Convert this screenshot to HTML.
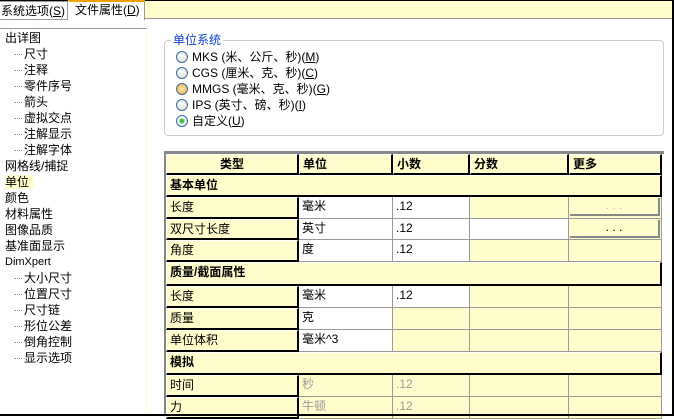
<!DOCTYPE html>
<html><head><meta charset="utf-8"><style>
*{margin:0;padding:0;box-sizing:border-box}
body{width:674px;height:416px;overflow:hidden;background:#fff;position:relative;font-family:"Liberation Sans","Noto Sans CJK SC","WenQuanYi Zen Hei",sans-serif;font-size:12px;color:#000}
.a{position:absolute}
.c{position:absolute;border-right:1px solid #999;border-bottom:1px solid #999;padding:0 3px;line-height:18px;white-space:nowrap}
.y{background:#fffdcc}
.w{background:#fff}
.t{border-right:2px solid #000;border-bottom:2px solid #000;border-left:1px solid #fff;border-top:1px solid #fff}
.g{color:#999}
.b{font-weight:bold}
.tree div{height:16px;line-height:16px;white-space:nowrap}
.sub{padding-left:19px;position:relative}
.sub:before{content:"";position:absolute;left:9px;top:8px;width:8px;border-top:1px dotted #999}
.r{position:absolute;left:12px;width:12px;height:12px;border-radius:50%;border:1px solid #3a6ea5;background:radial-gradient(circle at 40% 40%,#fff,#dcd8c8)}
</style></head><body>
<div class="a" style="left:0;top:0;width:674px;height:416px;border-top:1px solid #000;border-right:2px solid #000"></div>
<div class="a y" style="left:145px;top:1px;width:527px;height:18px;border-bottom:1px solid #999"></div>
<div class="a" style="left:0;top:1px;width:68px;height:19px;border:1px solid #999;border-left:none;border-bottom:1px solid #999;line-height:18px;padding-left:1px">系统选项(<u>S</u>)</div>
<div class="a" style="left:68px;top:0;width:77px;height:20px;border-left:1px solid #fff;border-top:2px solid #f0a000;border-right:1px solid #999;line-height:17px;padding-left:6px;background:#fff">文件属性(<u>D</u>)</div>
<div class="a" style="left:0;top:28px;width:147px;height:388px;border-top:1px solid #999;border-right:1px solid #fffdcc"></div>
<div class="a tree" style="left:5px;top:30px;width:140px">
<div>出详图</div>
<div class="sub">尺寸</div><div class="sub">注释</div><div class="sub">零件序号</div><div class="sub">箭头</div><div class="sub">虚拟交点</div><div class="sub">注解显示</div><div class="sub">注解字体</div>
<div>网格线/捕捉</div>
<div><span style="background:#fffdcc;padding-right:5px">单位</span></div>
<div>颜色</div><div>材料属性</div><div>图像品质</div><div>基准面显示</div>
<div style="font-size:11px">DimXpert</div>
<div class="sub">大小尺寸</div><div class="sub">位置尺寸</div><div class="sub">尺寸链</div><div class="sub">形位公差</div><div class="sub">倒角控制</div><div class="sub">显示选项</div>
</div>
<div class="a" style="left:164px;top:40px;width:500px;height:96px;border:1px solid #ccc;border-radius:4px"></div>
<div class="a" style="left:171px;top:33px;background:#fff;color:#1040d0;padding:0 2px;line-height:14px">单位系统</div>
<div class="a" style="left:164px;top:49px;width:200px">
<div class="r" style="top:2px"></div><div class="a" style="left:28px;top:0;line-height:16px;white-space:nowrap">MKS (米、公斤、秒)(<u>M</u>)</div>
<div class="r" style="top:18px"></div><div class="a" style="left:28px;top:16px;line-height:16px;white-space:nowrap">CGS (厘米、克、秒)(<u>C</u>)</div>
<div class="r" style="top:34px;background:radial-gradient(circle,#fff0b0,#f0a030)"></div><div class="a" style="left:28px;top:32px;line-height:16px;white-space:nowrap">MMGS (毫米、克、秒)(<u>G</u>)</div>
<div class="r" style="top:50px"></div><div class="a" style="left:28px;top:48px;line-height:16px;white-space:nowrap">IPS (英寸、磅、秒)(<u>I</u>)</div>
<div class="r" style="top:66px;background:radial-gradient(circle,#3c3 0,#3c3 2px,#fff 3px,#ddd)"></div><div class="a" style="left:28px;top:64px;line-height:16px;white-space:nowrap">自定义(<u>U</u>)</div>
</div>
<div class="a" style="left:164px;top:151px;width:500px;height:265px;border-top:3px solid #888;border-left:2px solid #888;background:#fff"></div>
<div class="c y t b" style="left:166px;top:154px;width:133px;height:21px;text-align:center">类型</div>
<div class="c y t b" style="left:299px;top:154px;width:94px;height:21px">单位</div>
<div class="c y t b" style="left:393px;top:154px;width:77px;height:21px">小数</div>
<div class="c y t b" style="left:470px;top:154px;width:99px;height:21px">分数</div>
<div class="c y t b" style="left:569px;top:154px;width:93px;height:21px">更多</div>
<div class="c y t b" style="left:166px;top:175px;width:496px;height:22px">基本单位</div>
<div class="c y t" style="left:166px;top:197px;width:133px;height:22px">长度</div>
<div class="c w" style="left:299px;top:197px;width:94px;height:22px">毫米</div>
<div class="c w" style="left:393px;top:197px;width:77px;height:22px">.12</div>
<div class="c y" style="left:470px;top:197px;width:99px;height:22px"></div>
<div class="c y" style="left:569px;top:197px;width:93px;height:22px;padding:1px"><div style="height:18px;border-right:2px solid #888;border-bottom:2px solid #888;background:#fffdcc;text-align:center;color:#bbb;line-height:14px">. . .</div></div>
<div class="c y t" style="left:166px;top:219px;width:133px;height:21px">双尺寸长度</div>
<div class="c w" style="left:299px;top:219px;width:94px;height:21px">英寸</div>
<div class="c w" style="left:393px;top:219px;width:77px;height:21px">.12</div>
<div class="c w" style="left:470px;top:219px;width:99px;height:21px"></div>
<div class="c y" style="left:569px;top:219px;width:93px;height:21px;padding:1px"><div style="height:18px;border-right:2px solid #888;border-bottom:2px solid #888;background:#fffdcc;text-align:center;line-height:14px">. . .</div></div>
<div class="c y t" style="left:166px;top:240px;width:133px;height:22px">角度</div>
<div class="c w" style="left:299px;top:240px;width:94px;height:22px">度</div>
<div class="c w" style="left:393px;top:240px;width:77px;height:22px">.12</div>
<div class="c y" style="left:470px;top:240px;width:99px;height:22px"></div>
<div class="c y" style="left:569px;top:240px;width:93px;height:22px"></div>
<div class="c y t b" style="left:166px;top:262px;width:496px;height:24px">质量/截面属性</div>
<div class="c y t" style="left:166px;top:286px;width:133px;height:22px">长度</div>
<div class="c w" style="left:299px;top:286px;width:94px;height:22px">毫米</div>
<div class="c w" style="left:393px;top:286px;width:77px;height:22px">.12</div>
<div class="c y" style="left:470px;top:286px;width:99px;height:22px"></div>
<div class="c y" style="left:569px;top:286px;width:93px;height:22px"></div>
<div class="c y t" style="left:166px;top:308px;width:133px;height:22px">质量</div>
<div class="c w" style="left:299px;top:308px;width:94px;height:22px">克</div>
<div class="c y" style="left:393px;top:308px;width:77px;height:22px"></div>
<div class="c y" style="left:470px;top:308px;width:99px;height:22px"></div>
<div class="c y" style="left:569px;top:308px;width:93px;height:22px"></div>
<div class="c y t" style="left:166px;top:330px;width:133px;height:22px">单位体积</div>
<div class="c w" style="left:299px;top:330px;width:94px;height:22px">毫米^3</div>
<div class="c y" style="left:393px;top:330px;width:77px;height:22px"></div>
<div class="c y" style="left:470px;top:330px;width:99px;height:22px"></div>
<div class="c y" style="left:569px;top:330px;width:93px;height:22px"></div>
<div class="c y t b" style="left:166px;top:352px;width:496px;height:23px">模拟</div>
<div class="c y t" style="left:166px;top:375px;width:133px;height:22px">时间</div>
<div class="c y g" style="left:299px;top:375px;width:94px;height:22px">秒</div>
<div class="c y g" style="left:393px;top:375px;width:77px;height:22px">.12</div>
<div class="c y" style="left:470px;top:375px;width:99px;height:22px"></div>
<div class="c y" style="left:569px;top:375px;width:93px;height:22px"></div>
<div class="c y t" style="left:166px;top:397px;width:133px;height:22px">力</div>
<div class="c y g" style="left:299px;top:397px;width:94px;height:22px">牛顿</div>
<div class="c y g" style="left:393px;top:397px;width:77px;height:22px">.12</div>
<div class="c y" style="left:470px;top:397px;width:99px;height:22px"></div>
<div class="c y" style="left:569px;top:397px;width:93px;height:22px"></div>
<div class="a" style="left:0;top:414px;width:674px;height:2px;background:#000"></div>
</body></html>
